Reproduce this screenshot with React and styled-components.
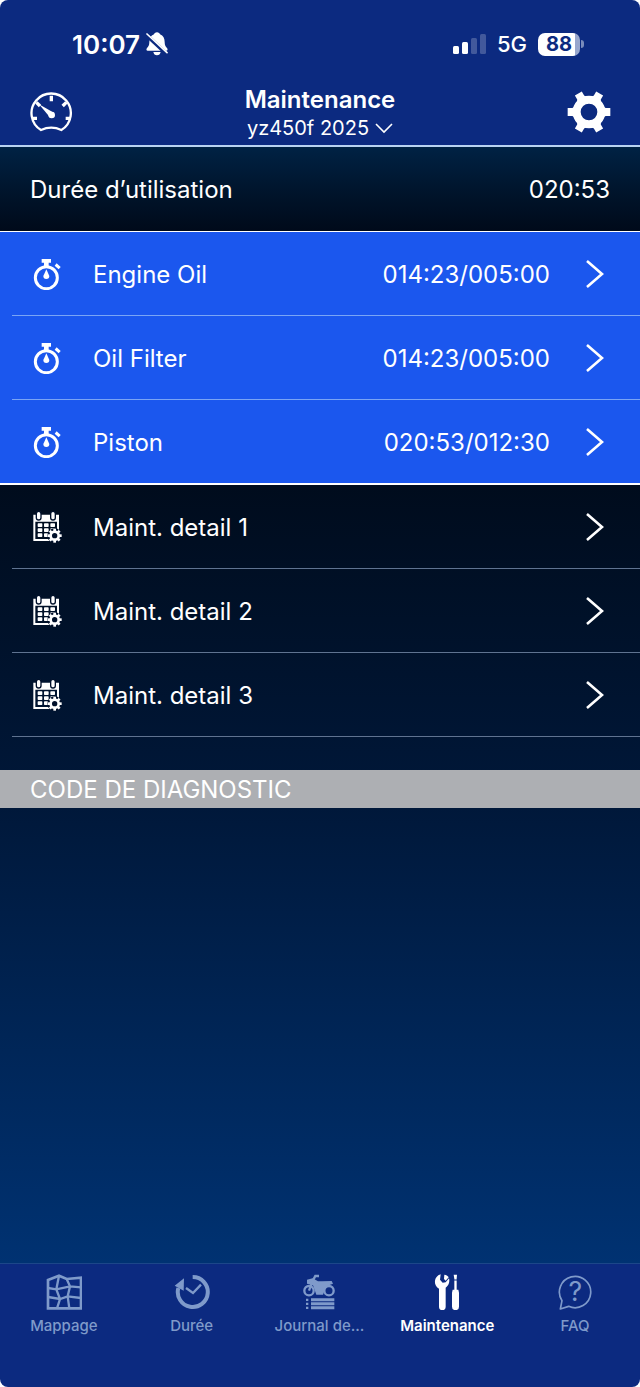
import React from "react";

import styled, { createGlobalStyle } from "styled-components";

const usage = "020:53";

const timers = [
  { name: "Engine Oil", value: "014:23/005:00" },
  { name: "Oil Filter", value: "014:23/005:00" },
  { name: "Piston", value: "020:53/012:30" },
];

const details = ["Maint. detail 1", "Maint. detail 2", "Maint. detail 3"];

const tabs = [
  { name: "Mappage", icon: <MapIcon /> },
  { name: "Durée", icon: <HistoryIcon /> },
  { name: "Journal de...", icon: <BikeIcon /> },
  { name: "Maintenance", icon: <ToolsIcon />, active: true },
  { name: "FAQ", icon: <FaqIcon /> },
];

export default function App() {
  return (
    <>
      <GlobalStyle />
      <Screen>
        <Header>
          <StatusBar>
            <Clock>
              10:07
              <BellOffIcon />
            </Clock>
            <Network>
              <SignalIcon />
              <span>5G</span>
              <Battery>
                <BatteryLevel>88</BatteryLevel>
              </Battery>
            </Network>
          </StatusBar>
          <NavBar>
            <IconButton aria-label="Tableau de bord">
              <GaugeIcon />
            </IconButton>
            <TitleGroup>
              <Title>Maintenance</Title>
              <BikePicker>
                yz450f 2025
                <svg width="18" height="12" viewBox="0 0 18 12" fill="none">
                  <path d="M1 2l8 8 8-8" stroke="currentColor" strokeWidth="1.6" />
                </svg>
              </BikePicker>
            </TitleGroup>
            <IconButton aria-label="Réglages">
              <GearIcon />
            </IconButton>
          </NavBar>
        </Header>

        <Content>
          <UsageRow>
            <span>Durée d’utilisation</span>
            <span>{usage}</span>
          </UsageRow>

          <List $alert>
            {timers.map((timer) => (
              <Item key={timer.name} $alert>
                <RowButton>
                  <StopwatchIcon />
                  <RowName>{timer.name}</RowName>
                  <span>{timer.value}</span>
                  <Chevron />
                </RowButton>
              </Item>
            ))}
          </List>

          <List>
            {details.map((name) => (
              <Item key={name}>
                <RowButton>
                  <CalendarIcon />
                  <RowName>{name}</RowName>
                  <Chevron />
                </RowButton>
              </Item>
            ))}
          </List>

          <SectionTitle>CODE DE DIAGNOSTIC</SectionTitle>
        </Content>

        <TabBar>
          {tabs.map((tab) => (
            <Tab key={tab.name} href="#" $active={tab.active}>
              {tab.icon}
              <span>{tab.name}</span>
            </Tab>
          ))}
        </TabBar>
      </Screen>
    </>
  );
}

function BellOffIcon() {
  return (
    <svg width="22" height="24" viewBox="0 0 66 72">
      <path
        fill="#fff"
        d="M33 1c5 0 8 3 9 6 10 4 14 13 14 23 0 10 3 14 7 18 3 4 2 8-2 8H5c-4 0-5-4-2-8 4-4 7-8 7-18 0-10 4-19 14-23 1-3 4-6 9-6zM22 60h22c-1 6-5 10-11 10s-10-4-11-10z"
      />
      <path d="M0 8l64 60" stroke="#0c2a80" strokeWidth="11" />
      <path d="M3 6l60 56" stroke="#fff" strokeWidth="5" strokeLinecap="round" />
    </svg>
  );
}

function SignalIcon() {
  return (
    <svg width="33" height="22" viewBox="0 0 33 22" fill="#fff">
      <rect x="0" y="13" width="6" height="8" rx="1.5" />
      <rect x="9" y="9" width="6" height="12" rx="1.5" />
      <g opacity="0.22">
        <rect x="18" y="5" width="6" height="16" rx="1.5" />
        <rect x="27" y="1" width="6" height="20" rx="1.5" />
      </g>
    </svg>
  );
}

function GaugeIcon() {
  return (
    <svg width="44" height="44" viewBox="0 -9 132 132" fill="none">
      <path
        d="M36 111A59 59 0 1 1 97 111Q67 97 36 111z"
        stroke="#fff"
        strokeWidth="7"
        strokeLinejoin="round"
      />
      <path
        d="M67 8v17M22 28l11 11M112 28l-11 11M9 76h15M110 76h15"
        stroke="#fff"
        strokeWidth="10"
      />
      <path d="M30 34l46 26-12 14z" fill="#fff" />
      <circle cx="68" cy="66" r="10" fill="#fff" />
    </svg>
  );
}

function GearIcon() {
  return (
    <svg width="44" height="44" viewBox="-66 -66 132 132" fill="#fff">
      <circle r="37" fill="none" stroke="#fff" strokeWidth="24" />
      {[0, 60, 120, 180, 240, 300].map((angle) => (
        <path key={angle} d="M40-18L50-12H64V12H50L40 18z" transform={`rotate(${angle})`} />
      ))}
    </svg>
  );
}

function StopwatchIcon() {
  return (
    <svg width="32" height="32" viewBox="0 0 96 96" fill="#fff">
      <circle cx="46" cy="59" r="33" fill="none" stroke="#fff" strokeWidth="9" />
      <path d="M32 3h28v11h-7v10H39V14h-7z" />
      <path d="M71 23l6-7 12 11-6 7z" />
      <path d="M46 34l9 20a9 9 0 1 1-18 0z" />
    </svg>
  );
}

function CalendarIcon() {
  return (
    <svg width="32" height="32" viewBox="0 0 96 96" fill="#fff">
      <path fillRule="evenodd" d="M7 11h77v79H7zM13 32v52h65V32z" />
      <rect x="16" y="1" width="14" height="26" rx="7" stroke="#00102a" strokeWidth="4" />
      <rect x="59" y="1" width="14" height="26" rx="7" stroke="#00102a" strokeWidth="4" />
      {[37, 52, 67].map((y) =>
        [20, 39, 58].map((x) => (
          <rect key={`${x}-${y}`} x={x} y={y} width="14" height="11" rx="2" />
        ))
      )}
      <circle cx="71" cy="74" r="22" fill="#00102a" />
      <circle cx="71" cy="74" r="12" fill="none" stroke="#fff" strokeWidth="8" />
      {[0, 45, 90, 135, 180, 225, 270, 315].map((angle) => (
        <rect
          key={angle}
          x="84"
          y="70"
          width="8"
          height="8"
          transform={`rotate(${angle} 71 74)`}
        />
      ))}
    </svg>
  );
}

function Chevron() {
  return (
    <ChevronSvg width="20" height="30" viewBox="0 0 20 30" fill="none">
      <path d="M2 2l15 13L2 28" stroke="#fff" strokeWidth="2.6" />
    </ChevronSvg>
  );
}

function MapIcon() {
  return (
    <svg width="36" height="36" viewBox="0 0 108 108" fill="none" stroke="currentColor">
      <path d="M6 18L39 5l23 10 43-4v92H6z" strokeWidth="8" />
      <path
        d="M39 5l-8 41 11 29-9 28M62 15l10 22-7 30 5 36M6 42l25 4 41-9 33 3M6 69l36 6 23-8 40 5"
        strokeWidth="7"
      />
    </svg>
  );
}

function HistoryIcon() {
  return (
    <svg width="36" height="36" viewBox="0 0 108 108" fill="none" stroke="currentColor">
      <path d="M56 9A45 45 0 1 1 13 42" strokeWidth="12" />
      <path d="M2 35l28-22-1 37z" fill="currentColor" stroke="none" />
      <path d="M36 42l21 15 24-25" strokeWidth="7" />
    </svg>
  );
}

function BikeIcon() {
  return (
    <svg width="36" height="36" viewBox="0 0 108 108" fill="currentColor">
      <g fill="none" stroke="currentColor">
        <circle cx="24" cy="50" r="14" strokeWidth="7" />
        <circle cx="84" cy="50" r="14" strokeWidth="7" />
        <path d="M54 6H43l-7 13-12 31" strokeWidth="7" />
      </g>
      <path d="M18 17l17-4 16 9h12l29-1 4 8-16 6-8 10-6 17H46L36 34l-18-5z" />
      <path d="M30 73h70v9H30zM30 85h70v9H30zM30 97h70v9H30z" />
      <path d="M15 74h7v7h-7zM15 86h7v7h-7zM15 98h7v7h-7z" />
    </svg>
  );
}

function ToolsIcon() {
  return (
    <svg width="36" height="36" viewBox="0 0 108 108" fill="currentColor">
      <path d="M35 1L33 17l8 9 9-1 10-12c3 10-1 22-10 28v57a9 9 0 0 1-20 0V44C12 35 14 7 35 1z" />
      <path d="M46 2c7 1 11 4 13 8l-9 10-5-5z" />
      <path d="M74 2h10l-1 12v33h5l2 9v42a10 10 0 0 1-21 0V56l2-9h5V14z" />
      <path d="M72 18h14" stroke="#0c2a80" strokeWidth="3" />
    </svg>
  );
}

function FaqIcon() {
  return (
    <svg width="36" height="36" viewBox="0 0 108 108" fill="none">
      <path
        d="M15 80A47 47 0 1 1 35 97L10 105z"
        stroke="currentColor"
        strokeWidth="5"
        strokeLinejoin="round"
      />
      <text x="55" y="81" textAnchor="middle" fontSize="80" fontWeight="400" fill="currentColor">
        ?
      </text>
    </svg>
  );
}

const GlobalStyle = createGlobalStyle`
  * {
    box-sizing: border-box;
  }

  body {
    margin: 0;
    background: #fff;
    color: #fff;
    font-family: Inter, "Liberation Sans", sans-serif;
  }

  button {
    border: none;
    background: none;
    padding: 0;
    color: inherit;
    font: inherit;
    cursor: pointer;
  }

  svg {
    flex: none;
    display: block;
  }
`;

const Screen = styled.div`
  min-height: 100vh;
  display: flex;
  flex-direction: column;
  border-radius: 8px;
  overflow: hidden;
  background: #0c2a80;
`;

const Header = styled.header`
  border-bottom: 2px solid #b9d3f2;
`;

const StatusBar = styled.div`
  height: 86px;
  padding: 2px 56px 0 72px;
  display: flex;
  align-items: center;
  justify-content: space-between;
`;

const Clock = styled.div`
  display: flex;
  align-items: center;
  gap: 6px;
  font-size: 26px;
  font-weight: 600;
`;

const Network = styled.div`
  display: flex;
  align-items: center;
  gap: 11px;
  font-size: 22px;
  font-weight: 500;
`;

const Battery = styled.div`
  display: flex;
  align-items: center;
  gap: 1px;

  &::after {
    content: "";
    width: 3px;
    height: 8px;
    border-radius: 0 3px 3px 0;
    background: #7a8cbb;
  }
`;

const BatteryLevel = styled.span`
  width: 42px;
  height: 23px;
  border-radius: 7px;
  background: linear-gradient(90deg, #fff 88%, #98a7cd 88%);
  color: #0c2a80;
  font-size: 20px;
  font-weight: 700;
  line-height: 23px;
  text-align: center;
`;

const NavBar = styled.div`
  padding: 0 29px 3px;
  display: flex;
  align-items: flex-end;
  justify-content: space-between;
`;

const IconButton = styled.button`
  height: 52px;
  display: flex;
`;

const TitleGroup = styled.div`
  display: flex;
  flex-direction: column;
  align-items: center;
  line-height: 28px;
`;

const Title = styled.h1`
  margin: 0;
  font-size: 24px;
  font-weight: 600;
`;

const BikePicker = styled.button`
  display: flex;
  align-items: center;
  gap: 6px;
  font-size: 20px;
`;

const Content = styled.main`
  flex: 1;
  background: linear-gradient(#000c1d 340px, #00183a 660px, #003272 100%);
  font-size: 24px;
`;

const UsageRow = styled.div`
  height: 84px;
  padding: 0 30px;
  display: flex;
  align-items: center;
  justify-content: space-between;
  background: linear-gradient(#002244, #00142b 55%, #000a1a);
`;

const List = styled.ul`
  list-style: none;
  margin: 0;
  padding: 0;
  border: solid #fff;
  border-width: ${(props) => (props.$alert ? "1px 0 2px" : "0")};
  background: ${(props) => (props.$alert ? "#1b57ee" : "none")};
`;

const Item = styled.li`
  margin-left: 12px;
  border-bottom: 1px solid ${(props) => (props.$alert ? "#7aa5f5" : "#5f7390")};

  &:last-child {
    border-bottom-width: ${(props) => (props.$alert ? "0" : "1px")};
  }
`;

const RowButton = styled.button`
  width: 100%;
  height: 83px;
  padding: 1px 35px 0 19px;
  display: flex;
  align-items: center;
  text-align: left;
`;

const RowName = styled.span`
  flex: 1;
  margin-left: 30px;
`;

const ChevronSvg = styled.svg`
  margin-left: 35px;
`;

const SectionTitle = styled.h2`
  margin: 33px 0 0;
  padding: 1px 30px 0;
  background: #adafb3;
  font-size: 24px;
  font-weight: 400;
  line-height: 37px;
`;

const TabBar = styled.nav`
  height: 124px;
  padding: 10px 1px 0 0;
  display: flex;
  align-items: flex-start;
  border-top: 1px solid #1c4689;
`;

const Tab = styled.a`
  flex: 1 1 0;
  display: flex;
  flex-direction: column;
  align-items: center;
  gap: 6px;
  color: ${(props) => (props.$active ? "#fff" : "#7f9aca")};
  font-size: 15px;
  font-weight: ${(props) => (props.$active ? 600 : 500)};
  line-height: 20px;
  text-decoration: none;
`;
